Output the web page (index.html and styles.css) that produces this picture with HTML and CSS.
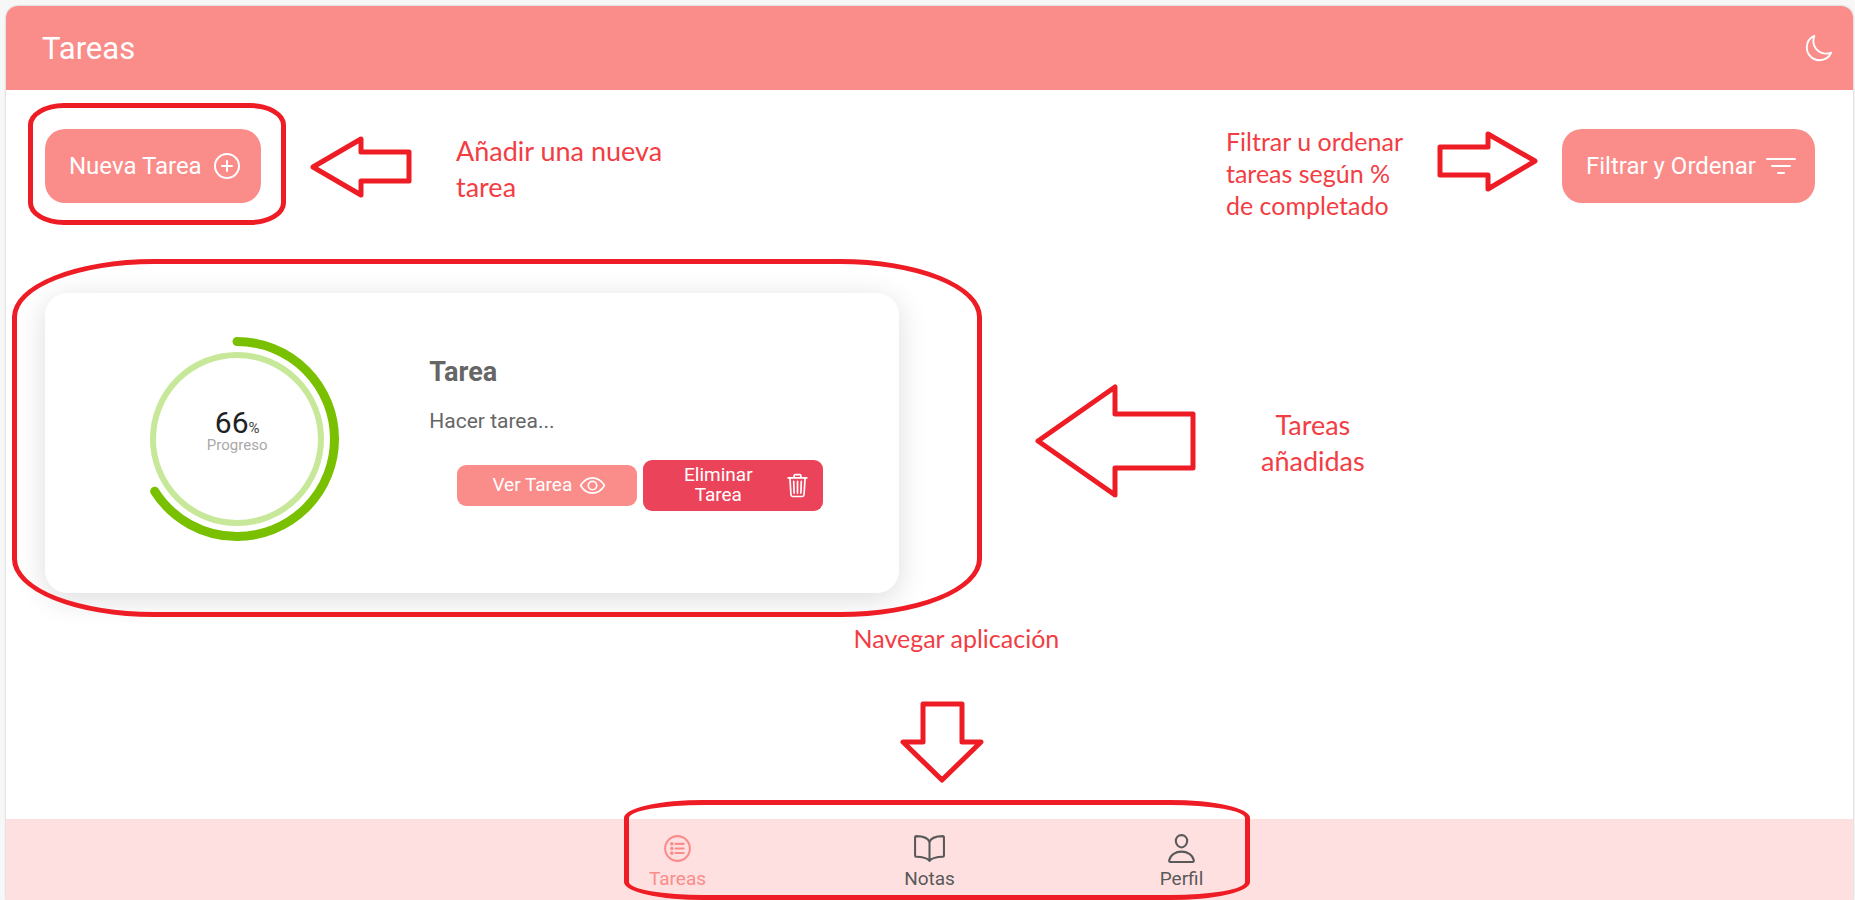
FILE: index.html
```
<!DOCTYPE html>
<html lang="es">
<head>
<meta charset="utf-8">
<title>Tareas</title>
<link rel="stylesheet" href="styles.css">
</head>
<body>
<div class="app">
  <header class="header">
    <h1 class="header-title">Tareas</h1>
    <button class="icon-button" aria-label="Modo oscuro">
      <svg class="icon icon-md" viewBox="0 0 512 512"><path d="M160 136c0-30.62 4.51-61.61 16-88C99.57 81.27 48 159.32 48 248c0 119.29 96.71 216 216 216 88.68 0 166.73-51.57 200-128-26.39 11.49-57.38 16-88 16-119.29 0-216-96.71-216-216z"/></svg>
    </button>
  </header>

  <main class="content">
    <div class="toolbar">
      <button class="button">Nueva Tarea
        <svg class="icon icon-lg" viewBox="0 0 512 512"><circle cx="256" cy="256" r="192"/><path d="M256 176v160M336 256H176"/></svg>
      </button>
      <button class="button">Filtrar y Ordenar
        <svg class="icon icon-lg" viewBox="0 0 512 512"><path d="M32 144h448M112 256h288M208 368h96"/></svg>
      </button>
    </div>

    <article class="card">
      <div class="progress">
        <svg class="progress-ring" viewBox="0 0 204 204">
          <circle class="ring-track" cx="102" cy="102" r="84"/>
          <circle class="ring-value" cx="102" cy="102" r="97.5" pathLength="100" stroke-dasharray="66 100" transform="rotate(-90 102 102)"/>
        </svg>
        <div class="progress-text">
          <div class="progress-value">66<span class="progress-unit">%</span></div>
          <div class="progress-label">Progreso</div>
        </div>
      </div>
      <div class="card-body">
        <h2 class="card-title">Tarea</h2>
        <p class="card-text">Hacer tarea...</p>
        <div class="card-actions">
          <button class="small-button">Ver Tarea
            <svg class="icon icon-sm" viewBox="0 0 512 512"><path d="M255.66 112c-77.94 0-157.89 45.11-220.83 135.33a16 16 0 00-.27 17.77C82.92 340.8 161.8 400 255.66 400c92.84 0 173.34-59.38 221.79-135.25a16.14 16.14 0 000-17.47C428.89 172.28 347.8 112 255.66 112z"/><circle cx="256" cy="256" r="80"/></svg>
          </button>
          <button class="small-button danger"><span class="small-button-label">Eliminar Tarea</span>
            <svg class="icon icon-sm" viewBox="0 0 512 512"><path d="M112 112l20 320c.95 18.49 14.4 32 32 32h184c17.67 0 30.87-13.51 32-32l20-320M80 112h352M192 112V72a23.93 23.93 0 0124-24h80a23.93 23.93 0 0124 24v40M256 176v224M184 176l8 224M328 176l-8 224"/></svg>
          </button>
        </div>
      </div>
    </article>
  </main>

  <nav class="tabs">
    <a class="tab active" href="#tareas">
      <svg class="icon icon-tab" viewBox="0 0 512 512"><circle cx="256" cy="256" r="192"/><path d="M224 184h128M224 256h128M224 327h128"/><circle class="dot" cx="168" cy="184" r="12"/><circle class="dot" cx="168" cy="257" r="12"/><circle class="dot" cx="168" cy="328" r="12"/></svg>
      Tareas
    </a>
    <a class="tab" href="#notas">
      <svg class="icon icon-tab" viewBox="0 0 512 512"><path d="M256 160c16-63.16 76.43-95.41 208-96a15.94 15.94 0 0116 16v288a16 16 0 01-16 16c-128 0-177.45 25.81-208 64-30.37-38-80-64-208-64-9.88 0-16-8.05-16-17.9V80a15.94 15.94 0 0116-16c131.57.59 192 32.84 208 96zM256 160v288"/></svg>
      Notas
    </a>
    <a class="tab" href="#perfil">
      <svg class="icon icon-tab" viewBox="0 0 512 512"><path d="M344 144c-3.92 52.87-44 96-88 96s-84.15-43.12-88-96c-4-55 35-96 88-96s92 42 88 96zM256 304c-87 0-175.3 48-191.64 138.6C62.39 453.52 68.57 464 80 464h352c11.44 0 17.62-10.48 15.65-21.4C431.3 352 343 304 256 304z"/></svg>
      Perfil
    </a>
  </nav>
</div>

<div class="guide">
  <div class="outline outline-new"></div>
  <div class="outline outline-card"></div>
  <div class="outline outline-tabs"></div>

  <svg class="arrow arrow-new" width="104" height="64" viewBox="0 0 104 64"><path d="M5 32 53 4v13h48v29H53v14z"/></svg>
  <svg class="arrow arrow-filter" width="104" height="64" viewBox="0 0 104 64"><path d="M99 32 52 5v13H4v28h48v14z"/></svg>
  <svg class="arrow arrow-card" width="164" height="118" viewBox="0 0 164 118"><path d="M5 59 82 5v27h78v54H82v27z"/></svg>
  <svg class="arrow arrow-tabs" width="88" height="88" viewBox="0 0 88 88"><path d="M24 6h39v38h19L43 82 4 44h20z"/></svg>

  <p class="note note-new">Añadir una nueva<br>tarea</p>
  <p class="note note-filter">Filtrar u ordenar<br>tareas según %<br>de completado</p>
  <p class="note note-card">Tareas<br>añadidas</p>
  <p class="note note-tabs">Navegar aplicación</p>
</div>
</body>
</html>
```
FILE: styles.css
```
* {
  box-sizing: border-box;
}

body {
  margin: 0;
  height: 100vh;
  padding: 6px 2px 0 6px;
  background: #f7f7f7;
  font-family: Roboto, "Liberation Sans", sans-serif;
  position: relative;
  overflow: hidden;
}

h1, h2, p {
  margin: 0;
}

button {
  border: 0;
  font-family: inherit;
  color: #fff;
}

.app {
  display: flex;
  flex-direction: column;
  height: 100%;
  background: #fff;
  border-radius: 12px 12px 0 0;
  box-shadow: 0 0 2px rgba(0, 0, 0, 0.3);
  overflow: hidden;
}

.header {
  display: flex;
  align-items: center;
  justify-content: space-between;
  height: 84px;
  flex: none;
  padding: 0 19px 0 36px;
  background: #fa8c8a;
  color: #fff;
}

.header-title {
  font-size: 31px;
  font-weight: 400;
}

.icon-button {
  display: flex;
  padding: 0;
  background: none;
}

.icon {
  flex: none;
  fill: none;
  stroke: currentColor;
  stroke-width: 32;
  stroke-linecap: round;
  stroke-linejoin: round;
}

.icon-sm { width: 27px; height: 27px; }
.icon-md { width: 30px; height: 30px; }
.icon-lg { width: 32px; height: 32px; }
.icon-tab { width: 33px; height: 33px; }

.dot {
  fill: currentColor;
}

.content {
  flex: 1;
  padding: 39px 38px 0 39px;
}

.toolbar {
  display: flex;
  justify-content: space-between;
}

.button {
  display: flex;
  align-items: center;
  gap: 9px;
  height: 74px;
  padding: 0 18px 0 24px;
  border-radius: 20px;
  background: #fa8c8a;
  font-size: 24px;
}

.card {
  display: flex;
  align-items: center;
  width: 48.25%;
  height: 300px;
  margin-top: 90px;
  border-radius: 22px;
  background: #fff;
  box-shadow: 0 6px 30px rgba(0, 0, 0, 0.14);
}

.progress {
  display: grid;
  place-items: center;
  width: 45%;
  padding-bottom: 9px;
}

.progress-ring,
.progress-text {
  grid-area: 1 / 1;
}

.progress-ring {
  width: 204px;
  height: 204px;
  fill: none;
}

.ring-track {
  stroke: #c7e898;
  stroke-width: 6;
}

.ring-value {
  stroke: #78c000;
  stroke-width: 9;
  stroke-linecap: round;
}

.progress-text {
  padding-bottom: 12px;
  text-align: center;
}

.progress-value {
  font-size: 30px;
  line-height: 24px;
  color: #222;
}

.progress-unit {
  font-size: 15px;
  line-height: 15px;
  color: #444;
}

.progress-label {
  font-size: 15px;
  line-height: 18px;
  color: #a9a9a9;
}

.card-body {
  flex: 1;
  padding-bottom: 22px;
}

.card-title {
  font-size: 27px;
  line-height: 36px;
  font-weight: 700;
  color: #666;
}

.card-text {
  margin-top: 17px;
  font-size: 21px;
  line-height: 28px;
  color: #666;
}

.card-actions {
  display: flex;
  align-items: center;
  gap: 6px;
  margin-top: 25px;
  padding-left: 28px;
}

.small-button {
  display: flex;
  align-items: center;
  justify-content: center;
  gap: 7px;
  width: 180px;
  min-height: 41px;
  padding: 5px 12px 5px 16px;
  border-radius: 9px;
  background: #fa8c8a;
  font-size: 19px;
  line-height: 20px;
}

.danger {
  min-height: 51px;
  background: #eb445a;
}

.small-button-label {
  flex: 1;
}

.tabs {
  display: flex;
  justify-content: center;
  flex: none;
  height: 81px;
  background: #ffe0e0;
}

.tab {
  display: flex;
  flex-direction: column;
  align-items: center;
  gap: 3px;
  width: 252px;
  padding-top: 13px;
  font-size: 19px;
  line-height: 22px;
  color: #595959;
  text-decoration: none;
}

.active {
  color: #fa8c8a;
}

/* Guide layer drawn over the app */
.guide {
  position: absolute;
  inset: 0;
  overflow: hidden;
  pointer-events: none;
}

.outline,
.arrow,
.note {
  position: absolute;
}

.outline {
  border: 5px solid #ee1c24;
}

.outline-new {
  left: 28px;
  top: 103px;
  width: 258px;
  height: 122px;
  border-radius: 36px / 22px;
}

.outline-card {
  left: 12px;
  top: 259px;
  width: 970px;
  height: 358px;
  border-radius: 142px / 58px;
}

.outline-tabs {
  left: calc(50% - 304px);
  bottom: 0;
  width: 626px;
  height: 100px;
  border-radius: 80px / 18px;
}

.arrow {
  fill: none;
  stroke: #ee1c24;
  stroke-width: 5;
  stroke-linejoin: round;
}

.arrow-new { left: 308px; top: 135px; }
.arrow-filter { right: 315px; top: 129px; }
.arrow-card { left: 1033px; top: 382px; }
.arrow-tabs { left: calc(50% - 29px); bottom: 114px; }

.note {
  font-family: Lato, "Open Sans", sans-serif;
  font-size: 27px;
  line-height: 36px;
  color: #f23d44;
  white-space: nowrap;
}

.note-new { left: 456px; top: 133px; }
.note-filter { right: 452px; top: 125px; font-size: 25px; line-height: 32px; }
.note-card { left: 1261px; top: 407px; text-align: center; }
.note-tabs { left: calc(50% - 74px); bottom: 244px; font-size: 25px; }
```
